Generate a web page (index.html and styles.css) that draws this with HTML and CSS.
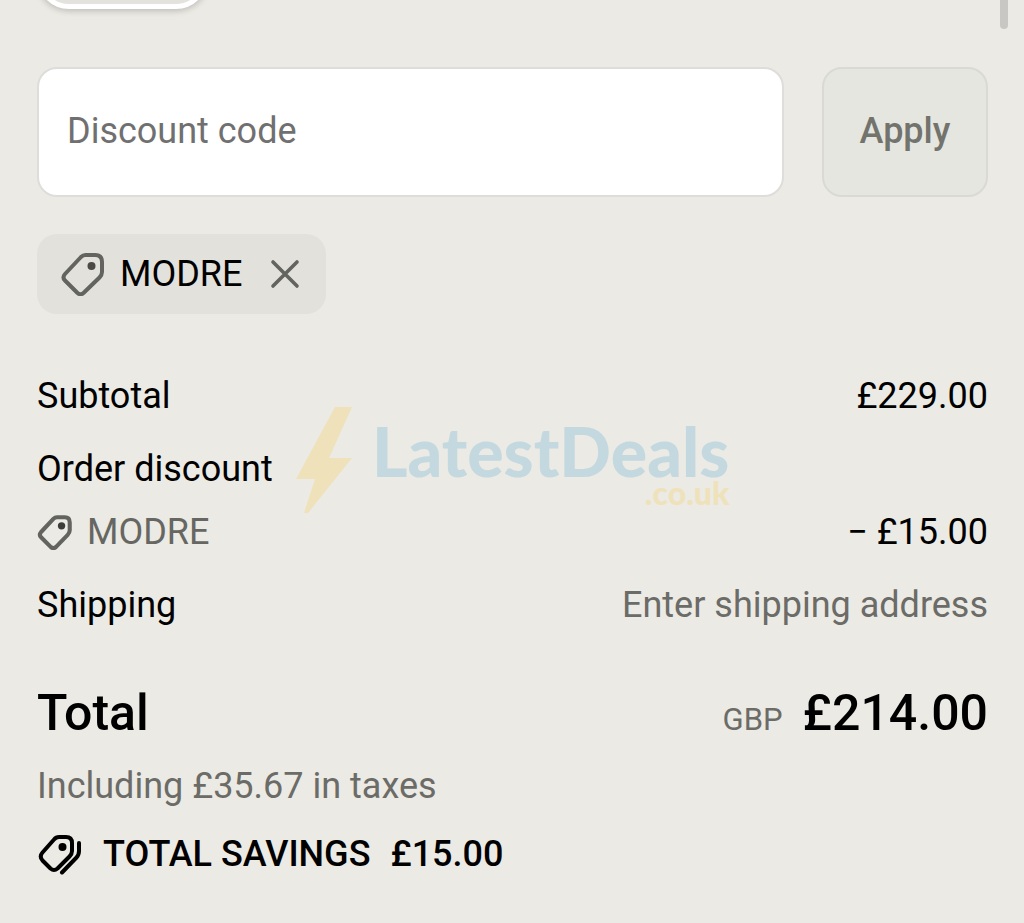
FILE: index.html
```
<!DOCTYPE html>
<html lang="en">

<head>
  <meta charset="UTF-8">
  <meta name="viewport" content="width=device-width, initial-scale=1">
  <title>Order summary</title>
  <link rel="stylesheet" href="styles.css">
</head>

<body>
  <div class="scroll-thumb"></div>

  <main class="summary">
    <div class="product">
      <div class="product-image"></div>
    </div>

    <form class="discount-form">
      <input class="discount-input" type="text" placeholder="Discount code" aria-label="Discount code">
      <button class="apply-button" type="submit">Apply</button>
    </form>

    <div class="chip">
      <svg class="chip-tag" viewBox="0 0 44 44" fill="none" stroke="#63635f" stroke-width="4" stroke-linejoin="round">
        <path d="M24.500 3H34Q41 3 41 10V20Q41 23 38.500 25.500L22.500 41Q19.500 43.500 16.500 41L4 28.500Q1 25.500 4 22L20 5Q22 3 24.500 3Z" />
        <circle cx="30.500" cy="14" r="4" fill="#4a4a47" stroke="none" />
      </svg>
      <span>MODRE</span>
      <button class="chip-remove" type="button" aria-label="Remove MODRE">
        <svg class="cross" viewBox="0 0 30 30" fill="none" stroke="#63635f" stroke-width="3.600" stroke-linecap="round">
          <path d="M3 3L27 27M27 3L3 27" />
        </svg>
      </button>
    </div>

    <section class="costs">
      <div class="row">
        <span>Subtotal</span>
        <span>£229.00</span>
      </div>
      <div class="row">
        <span>Order discount</span>
      </div>
      <div class="row row-code">
        <span class="code">
          <svg class="code-tag" viewBox="0 0 44 44" fill="none" stroke="#63635f" stroke-width="5" stroke-linejoin="round">
            <path d="M24.500 4H34Q40 4 40 10.500V20Q40 23 37.500 25.500L23 40.500Q20 43 17 40.500L5 28.500Q2 25.500 5 22L20 6Q22 4 24.500 4Z" />
            <circle cx="30" cy="14.500" r="4.500" fill="#3c3c3a" stroke="none" />
          </svg>
          MODRE
        </span>
        <span>− £15.00</span>
      </div>
      <div class="row">
        <span>Shipping</span>
        <span class="muted">Enter shipping address</span>
      </div>

      <div class="watermark" aria-hidden="true">
        <svg class="bolt" viewBox="0 0 56 106" fill="#efe2bb">
          <path d="M39 0H56L33 51H56L12 106H8L19 72H0Z" />
        </svg>
        <div class="brand">
          <span class="brand-name">LatestDeals</span>
          <span class="brand-domain">.co.uk</span>
        </div>
      </div>
    </section>

    <div class="row total">
      <span>Total</span>
      <span class="amount"><span class="currency">GBP</span>£214.00</span>
    </div>
    <p class="taxes">Including £35.67 in taxes</p>
    <div class="savings">
      <svg class="savings-tag" viewBox="0 0 46 42" fill="none" stroke="#000" stroke-width="4" stroke-linejoin="round" stroke-linecap="round">
        <path d="M22 4H29Q35 4 35 10V18Q35 21 32.500 23.500L20.500 35.500Q17 38.500 13.500 35.500L5.500 27.500Q2 23.500 5.500 19.500L17 6.500Q19 4 22 4Z" />
        <path d="M42 10V18Q42 22 39.500 24.500L25 39.500" />
        <circle cx="25.500" cy="14" r="4" fill="#000" stroke="none" />
      </svg>
      <span>TOTAL SAVINGS</span>
      <span>£15.00</span>
    </div>
  </main>
</body>

</html>
```
FILE: styles.css
```
* {
  box-sizing: border-box;
}

body {
  margin: 0;
  background-color: #ebeae4;
  color: #000;
  font-family: Roboto, sans-serif;
  font-size: 36px;
  line-height: 48px;
}

.scroll-thumb {
  position: absolute;
  top: 0;
  right: 16px;
  width: 8px;
  height: 29px;
  border-radius: 0 0 4px 4px;
  background-color: #c8c7c3;
}

.summary {
  padding: 0 36px 40px 37px;
}

/* only the bottom edge of the product image is in view */
.product {
  display: flex;
  align-items: flex-end;
  height: 9px;
}

.product-image {
  flex-shrink: 0;
  width: 171px;
  height: 171px;
  border: 5px solid #fff;
  border-radius: 32px;
  background-color: #e3e2dd;
  box-shadow: 0 2px 6px rgba(0, 0, 0, 0.2);
}

.discount-form {
  display: flex;
  gap: 38px;
  margin-top: 58px;
}

.discount-input {
  flex: 1;
  min-width: 0;
  height: 130px;
  padding: 0 28px 2px;
  border: 2px solid #deddda;
  border-radius: 20px;
  background-color: #fff;
  color: #000;
  font: inherit;
}

.discount-input::placeholder {
  color: #707070;
  opacity: 1;
}

.apply-button {
  width: 166px;
  padding: 0 0 2px;
  border: 2px solid #dadad5;
  border-radius: 20px;
  background-color: #e5e6df;
  color: #73736e;
  font: inherit;
  font-weight: 500;
  cursor: pointer;
}

.chip {
  display: inline-flex;
  align-items: center;
  height: 80px;
  margin-top: 37px;
  padding: 0 26px 0 24px;
  border-radius: 20px;
  background-color: #e2e1dc;
}

.chip-tag {
  width: 44px;
  height: 44px;
  margin-right: 15px;
}

.chip-remove {
  display: flex;
  margin-left: 28px;
  padding: 0;
  border: none;
  background: none;
  cursor: pointer;
}

.cross {
  width: 30px;
  height: 30px;
}

.costs {
  position: relative;
  display: flex;
  flex-direction: column;
  gap: 25px;
  margin-top: 58px;
}

.row {
  display: flex;
  justify-content: space-between;
}

.row-code {
  margin-top: -10px;
}

.code {
  display: flex;
  align-items: center;
  gap: 14px;
  color: #666662;
}

.code-tag {
  width: 36px;
  height: 36px;
}

.muted,
.taxes,
.currency {
  color: #6b6b67;
}

.watermark {
  position: absolute;
  top: 35px;
  left: 259px;
  display: flex;
  gap: 20px;
  font-family: Lato, sans-serif;
  font-weight: 900;
  pointer-events: none;
}

.bolt {
  width: 56px;
  height: 106px;
}

.brand {
  display: flex;
  flex-direction: column;
  align-items: flex-end;
  padding-top: 12px;
}

.brand-name {
  color: #c4d8e0;
  font-size: 68px;
  line-height: 64px;
}

.brand-domain {
  color: #efe2bb;
  font-size: 32px;
  line-height: 20px;
}

.total {
  margin-top: 52px;
  font-size: 50px;
  font-weight: 500;
  line-height: 64px;
}

.currency {
  margin-right: 20px;
  font-size: 31px;
  font-weight: 400;
}

.taxes {
  margin: 10px 0 0;
}

.savings {
  display: flex;
  align-items: center;
  margin-top: 20px;
  gap: 20px;
  font-weight: 500;
}

.savings-tag {
  width: 46px;
  height: 42px;
}
```
